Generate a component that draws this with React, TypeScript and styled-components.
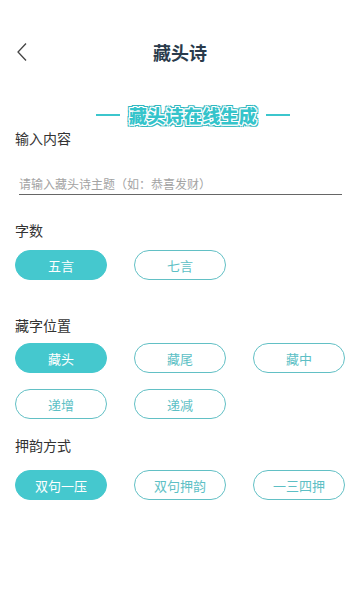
import React from "react";
import styled, { createGlobalStyle } from "styled-components";

const Global = createGlobalStyle`
  html, body { margin: 0; padding: 0; background: #fff; }
  body { font-family: "Noto Sans CJK SC", "Noto Sans", sans-serif; }
  * { box-sizing: border-box; }
`;

const Page = styled.div`
  width: 360px;
  min-height: 600px;
  padding: 0 15px;
  background: #fff;
`;

const Header = styled.header`
  position: relative;
  height: 104px;
  display: flex;
  align-items: center;
  justify-content: center;
`;

const Back = styled.button`
  position: absolute;
  left: 1px;
  top: 41px;
  width: 14px;
  height: 22px;
  padding: 0;
  border: none;
  background: none;
  display: flex;
  align-items: center;
`;

const Title = styled.h1`
  margin: 0;
  font-size: 18px;
  font-weight: 700;
  color: #2a3b4c;
  line-height: 24px;
`;

const Banner = styled.div`
  height: 22px;
  padding-left: 26px;
  display: flex;
  align-items: center;
  justify-content: center;
  gap: 9px;
`;

const BannerLine = styled.span`
  width: 24px;
  height: 1.5px;
  background: #3cc6cd;
`;

const BannerText = styled.span`
  font-size: 18px;
  font-weight: 900;
  line-height: 22px;
  color: #35c4cb;
  letter-spacing: 0.3px;
  text-shadow:
    1px 0 #fff, -1px 0 #fff, 0 1px #fff, 0 -1px #fff,
    1px 1px #fff, -1px -1px #fff, 1px -1px #fff, -1px 1px #fff,
    2px 0 #2fb8bf, -2px 0 #2fb8bf, 0 2px #2fb8bf, 0 -2px #2fb8bf,
    2px 2px #2fb8bf, -2px -2px #2fb8bf, 2px -2px #2fb8bf, -2px 2px #2fb8bf;
`;

const Label = styled.div<{ $top: number }>`
  margin-top: ${(p) => p.$top}px;
  font-size: 14px;
  line-height: 20px;
  color: #333;
`;

const Input = styled.input`
  display: block;
  margin: 24px 3px 0 4px;
  width: calc(100% - 7px);
  height: 23px;
  padding: 0;
  border: none;
  border-bottom: 1.5px solid #666;
  outline: none;
  font-family: inherit;
  font-size: 12px;
  color: #333;
  background: transparent;
  &::placeholder { color: #a3a3a3; }
`;

const Grid = styled.div<{ $top: number }>`
  margin-top: ${(p) => p.$top}px;
  display: grid;
  grid-template-columns: repeat(3, 92px);
  justify-content: space-between;
  row-gap: 16px;
`;

const Pill = styled.button<{ $active?: boolean }>`
  height: 30px;
  border-radius: 15px;
  border: 1px solid ${(p) => (p.$active ? "#45c8ce" : "#62c0c5")};
  background: ${(p) => (p.$active ? "#45c8ce" : "#fff")};
  color: ${(p) => (p.$active ? "#fff" : "#5dbfc5")};
  font-family: inherit;
  font-size: 13px;
  padding: 0;
`;

type Group = { label: string; top: number; gridTop: number; items: string[] };

const groups: Group[] = [
  { label: "字数", top: 25, gridTop: 10, items: ["五言", "七言"] },
  { label: "藏字位置", top: 35, gridTop: 8, items: ["藏头", "藏尾", "藏中", "递增", "递减"] },
  { label: "押韵方式", top: 16, gridTop: 15, items: ["双句一压", "双句押韵", "一三四押"] },
];

export default function App() {
  return (
    <>
      <Global />
      <Page>
        <Header>
          <Back aria-label="返回">
            <svg width="12" height="20" viewBox="0 0 12 20">
              <polyline points="10,1.5 2,10 10,18.5" fill="none" stroke="#444" strokeWidth="1.3" />
            </svg>
          </Back>
          <Title>藏头诗</Title>
        </Header>
        <Banner>
          <BannerLine />
          <BannerText>藏头诗在线生成</BannerText>
          <BannerLine />
        </Banner>
        <Label $top={2}>输入内容</Label>
        <Input placeholder="请输入藏头诗主题（如：恭喜发财）" />
        {groups.map((g) => (
          <React.Fragment key={g.label}>
            <Label $top={g.top}>{g.label}</Label>
            <Grid $top={g.gridTop}>
              {g.items.map((it, i) => (
                <Pill key={it} $active={i === 0}>{it}</Pill>
              ))}
            </Grid>
          </React.Fragment>
        ))}
      </Page>
    </>
  );
}
